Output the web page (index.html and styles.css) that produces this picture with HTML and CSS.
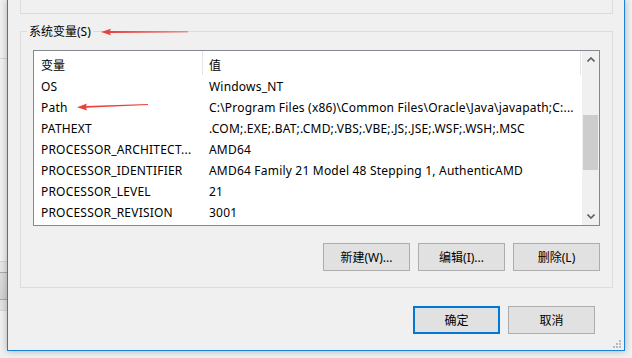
FILE: index.html
```html
<!DOCTYPE html>
<html lang="zh-CN">
<head>
<meta charset="utf-8">
<title>环境变量</title>
<link rel="stylesheet" href="styles.css">
</head>
<body>
<div class="screen">
  <div class="behind">
    <div class="bh-gap1"></div>
    <div class="bh-line light"></div>
    <div class="bh-gap2"></div>
    <div class="bh-line light"></div>
    <div class="bh-band1"></div>
    <div class="bh-line dark"></div>
    <div class="bh-band2"></div>
    <div class="bh-line dark"></div>
    <div class="bh-band3"></div>
    <div class="bh-line light"></div>
  </div>
  <div class="window">
    <div class="prev-group"></div>
    <fieldset class="group">
      <legend class="group-label">系统变量(S)</legend>
      <div class="listview">
        <div class="lv-main">
          <div class="lv-header">
            <div class="hcol c1">变量</div>
            <div class="hcol c2">值</div>
          </div>
          <div class="lv-row"><div class="cell c1">OS</div><div class="cell c2">Windows_NT</div></div>
          <div class="lv-row"><div class="cell c1">Path</div><div class="cell c2">C:\Program Files (x86)\Common Files\Oracle\Java\javapath;C:...</div></div>
          <div class="lv-row"><div class="cell c1">PATHEXT</div><div class="cell c2">.COM;.EXE;.BAT;.CMD;.VBS;.VBE;.JS;.JSE;.WSF;.WSH;.MSC</div></div>
          <div class="lv-row"><div class="cell c1">PROCESSOR_ARCHITECT...</div><div class="cell c2">AMD64</div></div>
          <div class="lv-row"><div class="cell c1">PROCESSOR_IDENTIFIER</div><div class="cell c2">AMD64 Family 21 Model 48 Stepping 1, AuthenticAMD</div></div>
          <div class="lv-row"><div class="cell c1">PROCESSOR_LEVEL</div><div class="cell c2">21</div></div>
          <div class="lv-row"><div class="cell c1">PROCESSOR_REVISION</div><div class="cell c2">3001</div></div>
        </div>
        <div class="vscroll">
          <div class="sb-btn">
            <svg width="8" height="5" viewBox="0 0 8 5"><path d="M0.5 4.5 L4 1 L7.5 4.5" fill="none" stroke="#606060" stroke-width="1.6"/></svg>
          </div>
          <div class="sb-track"><div class="sb-thumb"></div></div>
          <div class="sb-btn">
            <svg width="8" height="5" viewBox="0 0 8 5"><path d="M0.5 0.5 L4 4 L7.5 0.5" fill="none" stroke="#606060" stroke-width="1.6"/></svg>
          </div>
        </div>
      </div>
      <div class="btn-row">
        <button class="btn">新建(W)...</button>
        <button class="btn">编辑(I)...</button>
        <button class="btn">删除(L)</button>
      </div>
    </fieldset>
    <div class="dlg-buttons">
      <button class="btn default">确定</button>
      <button class="btn">取消</button>
    </div>

    <svg class="arrow arrow-label" width="88" height="8" viewBox="0 0 88 8">
      <polygon points="0,4 10,0.8 9,3.1 87,3.4 87,4.3 9,5.1 10,7.3" fill="#e8433f"/>
    </svg>
    <svg class="arrow arrow-path" width="72" height="11" viewBox="0 0 72 11">
      <polygon points="0,6.2 10,2.6 9,5 71,3.1 71,4 9,6.8 10,9.6" fill="#e8433f"/>
    </svg>
    <svg class="grip" width="8" height="8" viewBox="0 0 8 8">
      <rect x="6" y="0" width="2" height="2" fill="#b9b9b9"/>
      <rect x="3" y="3" width="2" height="2" fill="#b9b9b9"/>
      <rect x="6" y="3" width="2" height="2" fill="#b9b9b9"/>
      <rect x="0" y="6" width="2" height="2" fill="#b9b9b9"/>
      <rect x="3" y="6" width="2" height="2" fill="#b9b9b9"/>
      <rect x="6" y="6" width="2" height="2" fill="#b9b9b9"/>
    </svg>
  </div>
</div>
</body>
</html>
```

FILE: styles.css
```css
* { box-sizing: border-box; }

html, body {
  margin: 0;
  padding: 0;
  background: #f0f0f0;
}

body {
  font-family: "Noto Sans", "Noto Sans CJK SC", sans-serif;
  font-size: 12px;
  color: #000;
  width: 632px;
  height: 358px;
  overflow: hidden;
}

.screen {
  display: flex;
  width: 632px;
  height: 358px;
}

/* window behind, visible on the left edge */
.behind {
  width: 7px;
  display: flex;
  flex-direction: column;
  background: #f0f0f0;
}
.bh-gap1 { height: 58px; }
.bh-gap2 { height: 202px; }
.bh-line { height: 1px; }
.bh-line.light { background: #d6d6d6; }
.bh-line.dark { background: #a9a9a9; }
.bh-band1 { height: 10px; background: #e6e6e6; }
.bh-band2 { height: 26px; background: linear-gradient(#dcdcdc, #d2d2d2); }
.bh-band3 { height: 10px; background: #e2e2e2; }

/* dialog window */
.window {
  position: relative;
  width: 618px;
  height: 351px;
  background: #f0f0f0;
  border-left: 1px solid #1883d7;
  border-right: 1px solid #1883d7;
  border-bottom: 1px solid #1883d7;
  box-shadow: 0 0 7px rgba(0, 0, 0, 0.28);
  display: flex;
  flex-direction: column;
}

.prev-group {
  height: 14px;
  margin: 0 11px 0 12px;
  border: 1px solid #dcdcdc;
  border-top: none;
}

.group {
  margin: 9px 11px 0 12px;
  padding: 11px 12px 16px 12px;
  border: 1px solid #dcdcdc;
  min-width: 0;
}

.group-label {
  margin-left: -6px;
  padding: 1px 2px 0 2px;
  line-height: 16px;
  height: 16px;
}

/* list view */
.listview {
  height: 176px;
  border: 1px solid #828790;
  background: #fff;
  display: flex;
}

.lv-main {
  flex: 1;
  min-width: 0;
  display: flex;
  flex-direction: column;
}

.lv-header {
  height: 24px;
  display: flex;
  align-items: stretch;
}

.hcol {
  display: flex;
  align-items: center;
  padding-top: 3px;
  border-right: 1px solid #e5e5e5;
  white-space: nowrap;
}
.hcol.c1 { width: 169px; padding-left: 7px; }
.hcol.c2 { width: 378px; padding-left: 6px; }

.lv-row {
  height: 21px;
  padding-top: 2px;
  display: flex;
  align-items: center;
}

.cell {
  white-space: nowrap;
  overflow: hidden;
  letter-spacing: 0.2px;
}
.cell.c1 { width: 169px; padding-left: 7px; }
.cell.c2 { width: 378px; padding-left: 6px; }

/* scrollbar */
.vscroll {
  width: 17px;
  background: #f0f0f0;
  display: flex;
  flex-direction: column;
}
.sb-btn {
  height: 17px;
  display: flex;
  align-items: center;
  justify-content: center;
}
.sb-track {
  flex: 1;
  display: flex;
  flex-direction: column;
  align-items: center;
}
.sb-thumb {
  margin-top: 47px;
  width: 15px;
  height: 55px;
  background: #cdcdcd;
}

/* buttons */
.btn-row {
  margin-top: 17px;
  display: flex;
  justify-content: flex-end;
  gap: 8px;
}

.btn {
  width: 87px;
  height: 28px;
  padding: 0;
  background: #e1e1e1;
  border: 1px solid #adadad;
  font-family: "Noto Sans", "Noto Sans CJK SC", sans-serif;
  font-size: 12px;
  color: #000;
  display: flex;
  align-items: center;
  justify-content: center;
}
.btn.default {
  border: 2px solid #0078d7;
}

.dlg-buttons {
  margin-top: 18px;
  padding-right: 29px;
  display: flex;
  justify-content: flex-end;
  gap: 8px;
}

/* annotations */
.arrow {
  position: absolute;
}
.arrow-label {
  left: 93px;
  top: 28px;
}
.arrow-path {
  left: 69px;
  top: 101px;
}

.grip {
  position: absolute;
  left: 605px;
  top: 340px;
}
```
